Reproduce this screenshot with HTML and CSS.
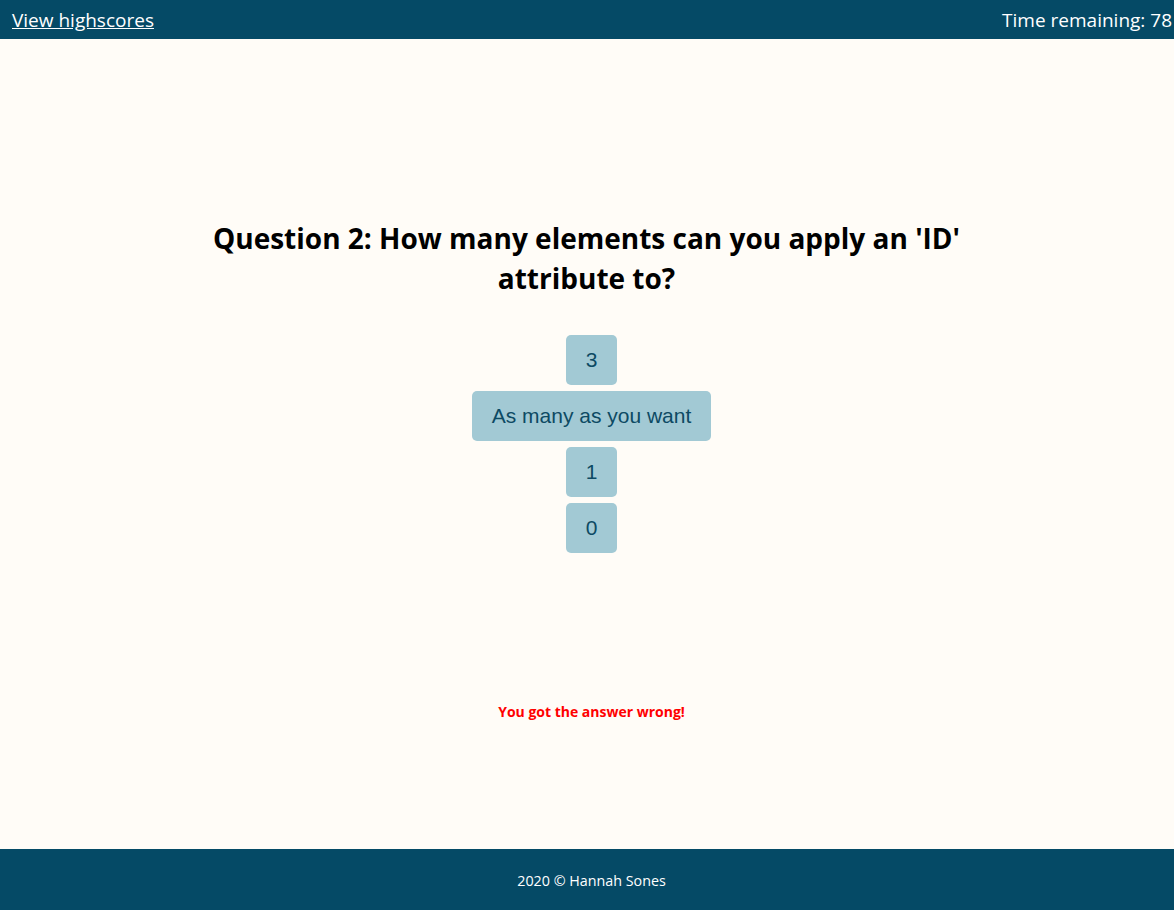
FILE: index.html
```html
<!DOCTYPE html>
<html>
<head>
<meta charset="utf-8">
<link rel="stylesheet" href="styles.css">
</head>
<body>
<header class="topbar">
  <a class="hs-link" href="#">View highscores</a>
  <span class="timer">Time remaining: 78</span>
</header>
<main class="quiz">
  <h1 class="question">Question 2: How many elements can you apply an 'ID' attribute to?</h1>
  <div class="answers">
    <button class="answer">3</button>
    <button class="answer">As many as you want</button>
    <button class="answer">1</button>
    <button class="answer">0</button>
  </div>
  <p class="feedback">You got the answer wrong!</p>
</main>
<footer class="footer">2020 © Hannah Sones</footer>
</body>
</html>
```
FILE: styles.css
```css
* { box-sizing: border-box; }
html, body { margin: 0; padding: 0; }
body {
  background: #fffcf7;
  font-family: "Open Sans", "Noto Sans", sans-serif;
  display: flex;
  flex-direction: column;
  min-height: 910px;
}
.topbar {
  height: 39px;
  background: #054a66;
  display: flex;
  justify-content: space-between;
  align-items: center;
  padding: 0 2px 0 12px;
  color: #fff;
  font-size: 19px;
}
.hs-link { color: #fff; text-decoration: underline; }
.quiz {
  flex: 1;
  display: flex;
  flex-direction: column;
  align-items: center;
  padding-top: 179px;
  padding-left: 9px;
}
.question {
  margin: 0 10px 0 0;
  width: 800px;
  text-align: center;
  font-size: 28px;
  line-height: 40px;
  font-weight: 700;
  color: #000;
}
.answers {
  margin-top: 37px;
  display: flex;
  flex-direction: column;
  align-items: center;
  gap: 6px;
}
.answer {
  height: 50px;
  min-width: 51px;
  padding: 0 20px;
  border: none;
  border-radius: 5px;
  background: #a2c9d4;
  color: #0d4a63;
  font-family: "Liberation Sans", Arial, sans-serif;
  font-size: 21px;
}
.feedback {
  margin: 149px 0 0;
  color: #ff0000;
  font-weight: 700;
  font-size: 14px;
  line-height: 19px;
}
.footer {
  height: 61px;
  background: #054a66;
  color: #fff;
  display: flex;
  align-items: center;
  justify-content: center;
  padding: 2px 0 0 9px;
  font-size: 14.3px;
}
```
